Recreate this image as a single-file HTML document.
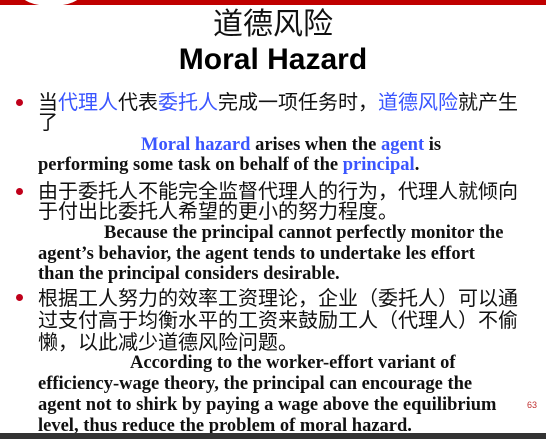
<!DOCTYPE html>
<html><head><meta charset="utf-8"><style>
body{margin:0;width:546px;height:439px;background:#fff;position:relative;overflow:hidden;font-family:"Liberation Sans","WenQuanYi Zen Hei",sans-serif}
.l{position:absolute;white-space:nowrap;line-height:1}
.cj{font-size:20px;color:#111;left:38px;font-family:"Liberation Sans","WenQuanYi Zen Hei",sans-serif}
.en{font-family:"Liberation Serif",serif;font-weight:bold;font-size:18.5px;color:#111;left:38px}
.b{color:#3a55ff}
.dot{position:absolute;left:16px;width:7px;height:7px;border-radius:50%;background:#c0001a}
</style></head><body>
<div style="position:absolute;left:0;top:0;width:546px;height:5px;background:#c00000"></div>
<div style="position:absolute;left:20px;top:-20px;width:62px;height:26px;border-radius:50%;background:#fff"></div>
<div class="l" style="left:0;width:546px;text-align:center;top:10px;font-size:30px;font-family:'WenQuanYi Zen Hei',sans-serif;color:#111">道德风险</div>
<div class="l" style="left:0;width:546px;text-align:center;top:45px;font-size:30px;font-weight:bold;color:#000">Moral Hazard</div>
<div class="dot" style="top:99px"></div>
<div class="l cj" style="top:93px">当<span class="b">代理人</span>代表<span class="b">委托人</span>完成一项任务时，<span class="b">道德风险</span>就产生</div>
<div class="l cj" style="top:113px">了</div>
<div class="l en" style="top:136px;left:141px"><span class="b">Moral hazard</span> arises when the <span class="b">agent</span> is</div>
<div class="l en" style="top:156px">performing some task on behalf of the <span class="b">principal</span>.</div>
<div class="dot" style="top:188px"></div>
<div class="l cj" style="top:182px">由于委托人不能完全监督代理人的行为，代理人就倾向</div>
<div class="l cj" style="top:202px">于付出比委托人希望的更小的努力程度。</div>
<div class="l en" style="top:224px;left:104px">Because the principal cannot perfectly monitor the</div>
<div class="l en" style="top:245px">agent’s behavior, the agent tends to undertake les effort</div>
<div class="l en" style="top:265px">than the principal considers desirable.</div>
<div class="dot" style="top:294px"></div>
<div class="l cj" style="top:289px">根据工人努力的效率工资理论，企业（委托人）可以通</div>
<div class="l cj" style="top:311px">过支付高于均衡水平的工资来鼓励工人（代理人）不偷</div>
<div class="l cj" style="top:333px">懒，以此减少道德风险问题。</div>
<div class="l en" style="top:354px;left:130px">According to the worker-effort variant of</div>
<div class="l en" style="top:375px">efficiency-wage theory, the principal can encourage the</div>
<div class="l en" style="top:396px">agent not to shirk by paying a wage above the equilibrium</div>
<div class="l" style="top:401px;left:527px;font-size:9px;color:#c03030">63</div>
<div class="l en" style="top:417px">level, thus reduce the problem of moral hazard.</div>
<div style="position:absolute;left:0;top:433px;width:546px;height:6px;background:#333"></div>
</body></html>
